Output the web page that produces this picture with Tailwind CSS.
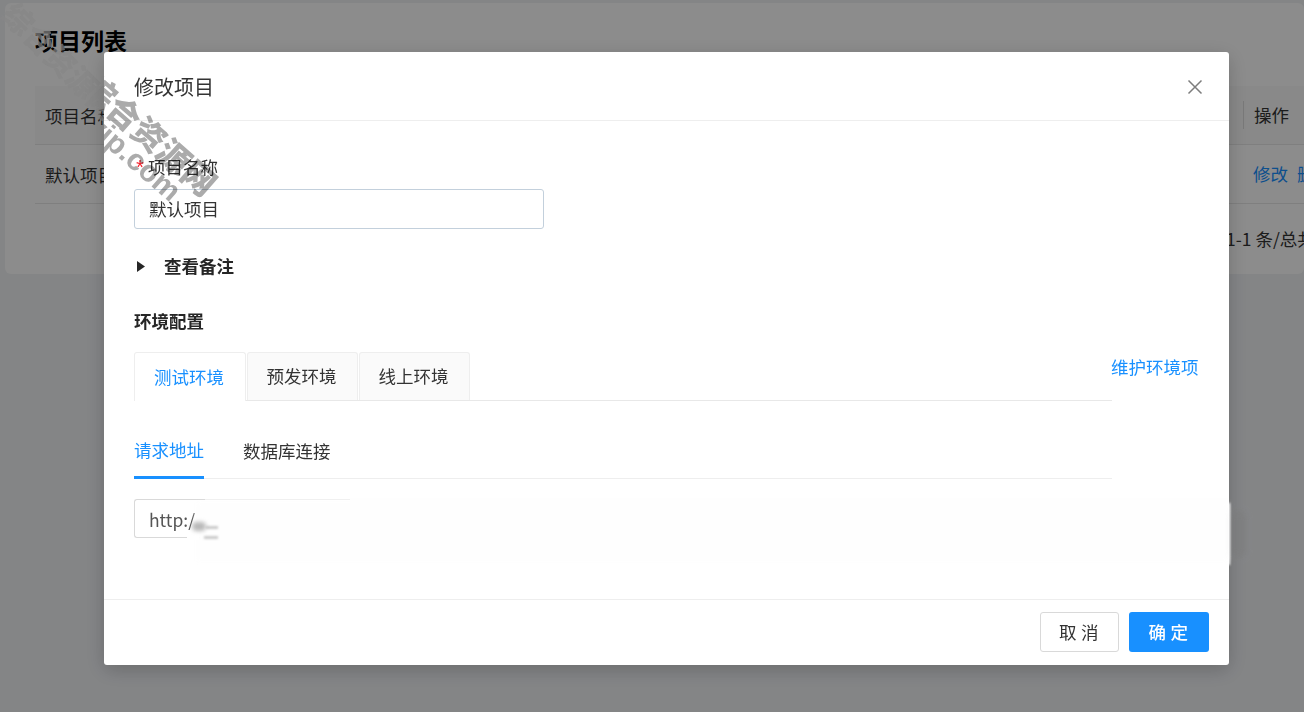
<!DOCTYPE html>
<html lang="zh-CN">
<head>
    <meta charset="UTF-8">
    <title>项目列表</title>
    <script src="https://cdn.jsdelivr.net/npm/@tailwindcss/browser@4"></script>
</head>
<body class="h-[712px] w-[1304px] overflow-hidden bg-[#f0f2f5] font-['Noto_Sans_CJK_SC','Noto_Sans',sans-serif] text-[17.5px] text-[#333]">
    <!-- Page behind the modal -->
    <div class="pl-[5px] pt-[3px]">
        <div class="h-[271px] rounded-md bg-white pl-[30px] pt-[19px]">
            <h2 class="text-[23px] leading-[36px] font-bold text-black">项目列表</h2>
            <div class="mt-[28px] flex h-[59px] items-center justify-between border-b border-[#e8e8e8] bg-[#fafafa] pl-[10px]">
                <span class="pt-[2px]">项目名称</span>
                <div class="flex w-[61px] shrink-0 items-center"><span class="h-[28px] border-l border-[#ddd] pr-[10px]"></span>操作</div>
            </div>
            <div class="flex h-[59px] items-center justify-between border-b border-[#e8e8e8] pl-[10px]">
                <span class="pt-[2px]">默认项目</span>
                <div class="flex w-[61px] shrink-0 gap-[9px] overflow-hidden pl-[10px] whitespace-nowrap text-[#1890ff]"><span>修改</span><span>删除</span></div>
            </div>
            <div class="mt-[22px] flex justify-end whitespace-nowrap"><span class="w-[78px] overflow-hidden">1-1 条/总共</span></div>
        </div>
    </div>

    <!-- Watermark under the backdrop -->
    <div class="pointer-events-none fixed top-[60px] left-[62px] -translate-x-1/2 -translate-y-1/2 rotate-[45deg] text-[30px] leading-none font-black whitespace-nowrap text-[#f4f4f4]/70">综合资源网</div>

    <!-- Backdrop -->
    <div class="fixed inset-0 bg-black/45"></div>

    <!-- Modal -->
    <div class="fixed top-[52px] left-[104px] flex h-[613px] w-[1125px] flex-col rounded-[3px] bg-white shadow-[0_5px_20px_rgba(0,0,0,0.2)]">
        <div class="flex h-[69px] shrink-0 items-center justify-between border-b border-[#eeeeee] pt-[2px] pr-[26px] pl-[30px]">
            <h3 class="text-[20px]">修改项目</h3>
            <svg class="h-[16px] w-[16px] text-[#7d7d7d]" viewBox="0 0 16 16" fill="none" stroke="currentColor" stroke-width="1.5"><path d="M1.5 1.5 14.5 14.5M14.5 1.5 1.5 14.5"/></svg>
        </div>

        <div class="flex-1 px-[30px]">
            <div class="mt-[33px] flex h-[26px] items-center leading-none">
                <span class="mr-[2px] w-[12px] pt-[6px] font-['Liberation_Mono'] text-[20px] text-[#f5222d]">*</span>项目名称
            </div>
            <input class="mt-[9px] block h-[40px] w-[410px] rounded-[3px] border border-[#c3d0dc] px-[14px] pb-[2px] text-[17.5px]" value="默认项目">

            <div class="mt-[24px] flex h-[26px] items-center font-bold text-[#262626]">
                <svg class="ml-[3px] mr-[19px] h-[11px] w-[8px]" viewBox="0 0 8 11" fill="currentColor"><path d="M0 0 8 5.5 0 11Z"/></svg>
                查看备注
            </div>
            <div class="mt-[29px] h-[26px] leading-[26px] font-bold text-[#262626]">环境配置</div>

            <div class="mt-[18px] flex items-start">
                <div class="flex h-[49px] w-[978px] shrink-0 items-end gap-[1px] border-b border-[#e8e8e8]">
                    <div class="-mb-px flex h-[49px] w-[112px] items-center justify-center rounded-t-[3px] border border-b-0 border-[#eeeeee] bg-white pr-[2px] text-[#1890ff]">测试环境</div>
                    <div class="flex h-[48px] w-[111px] items-center justify-center rounded-t-[3px] border border-b-0 border-[#eeeeee] bg-[#fafafa] pr-[2px]">预发环境</div>
                    <div class="flex h-[48px] w-[111px] items-center justify-center rounded-t-[3px] border border-b-0 border-[#eeeeee] bg-[#fafafa] pr-[2px]">线上环境</div>
                </div>
                <a class="mt-[2px] -ml-px whitespace-nowrap text-[#1890ff]">维护环境项</a>
            </div>

            <div class="mt-[28px] flex h-[50px] w-[978px] gap-[39px] border-b border-[#eeeeee]">
                <div class="-mb-px flex h-[50px] items-center border-b-[3px] border-[#1890ff] pb-[4px] text-[#1890ff]">请求地址</div>
                <div class="flex h-[49px] items-center pb-[4px]">数据库连接</div>
            </div>

            <div class="mt-[20px] flex h-[39px] w-[216px] items-center rounded-l-[3px] border border-r-0 border-[#d9d9d9] pt-[3px] pl-[14px] text-[#555]">http:/</div>
        </div>

        <div class="flex h-[66px] shrink-0 items-center justify-end gap-[10px] border-t border-[#eeeeee] pr-[20px] pb-[1px]">
            <button class="h-[40px] w-[79px] rounded-[3px] border border-[#d9d9d9] bg-white pl-[3px] tracking-[4.4px]">取消</button>
            <button class="h-[40px] w-[80px] rounded-[3px] bg-[#1890ff] pl-[3px] font-medium tracking-[4.4px] text-white">确定</button>
        </div>

        <!-- Watermark, clipped to the modal -->
        <div class="pointer-events-none absolute inset-0 overflow-hidden mix-blend-multiply">
            <div class="absolute top-[82px] left-[46px] -translate-x-1/2 -translate-y-1/2 rotate-[41deg] text-[33px] leading-none font-black whitespace-nowrap text-[#ababab]">综合资源网</div>
            <div class="absolute top-[106px] left-[30px] -translate-x-1/2 -translate-y-1/2 rotate-[41deg] font-['Liberation_Sans'] text-[30px] leading-none font-bold whitespace-nowrap text-[#ababab]">vip.com</div>
        </div>
    </div>

    <!-- Redaction smear over the url field -->
    <div class="fixed top-[503px] left-[196px] h-[58px] w-[1032px] bg-[#fefefe] blur-[2px]"></div>
    <div class="fixed top-[532px] left-[187px] h-[8px] w-[12px] bg-white"></div>
    <div class="fixed top-[498px] left-[350px] h-[6px] w-[878px] bg-[#fefefe]"></div>
    <div class="fixed top-[498px] left-[205px] h-[3px] w-[145px] bg-white/60"></div>
    <div class="fixed top-[522px] left-[192px] h-[9px] w-[14px] rounded-full bg-[#888]/60 blur-[2px]"></div>
    <div class="fixed top-[526px] left-[206px] h-[3px] w-[12px] bg-[#999]/50 blur-[1px]"></div>
    <div class="fixed top-[536px] left-[204px] h-[3px] w-[14px] bg-[#999]/50 blur-[1px]"></div>
    <div class="fixed top-[510px] left-[1232px] h-[48px] w-[14px] rounded-full bg-[#777]/40 blur-[3px]"></div>
    <div class="fixed top-[503px] left-[1228px] h-[62px] w-[2px] bg-white blur-[1px]"></div>
</body>
</html>
